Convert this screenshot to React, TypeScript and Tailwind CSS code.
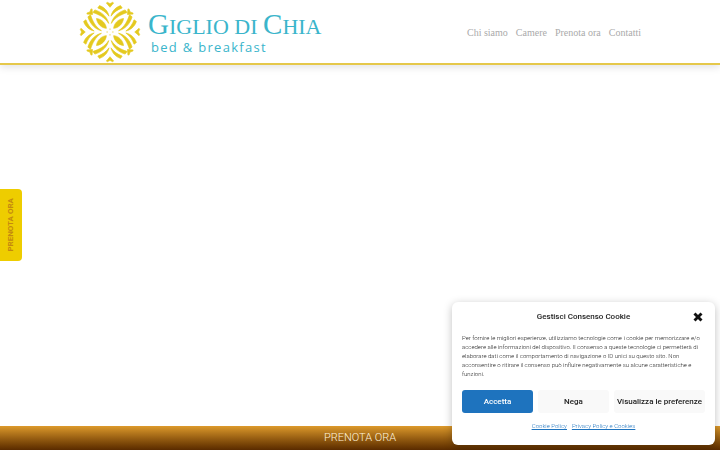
import React from 'react';
import { X } from 'lucide-react';

const navLinks = ['Chi siamo', 'Camere', 'Prenota ora', 'Contatti'];

// One half of an axis group, mirrored and rotated to build the whole flower
const HalfPetals = () => (
  <g>
    <path d="M3 -48 C6 -62 16 -75 32 -80 L37 -73 C24 -68 12 -61 3 -48 Z" />
    <path d="M4 -26 C7 -43 24 -61 46 -67 L52 -59 C34 -53 16 -45 4 -26 Z" />
  </g>
);

// Small tuft at the end of each axis and diagonal
const Tuft = () => <path d="M0 -75 L-11 -88 L-8 -90 L0 -86 L8 -90 L11 -88 Z" />;

const Flower = () => (
  <svg
    viewBox="-94 -94 188 188"
    className="size-[62px] shrink-0"
    fill="#e4c91f"
    stroke="#e4c91f"
    strokeWidth="2"
    strokeLinejoin="round"
    aria-hidden="true"
  >
    {[0, 90, 180, 270].map((angle) => (
      <g key={angle} transform={`rotate(${angle})`}>
        <HalfPetals />
        <g transform="scale(-1 1)">
          <HalfPetals />
        </g>
        <Tuft />
        <g transform="rotate(45)">
          <Tuft />
        </g>
        <path d="M11 -11 C12 -25 24 -39 41 -41 C39 -24 25 -12 11 -11 Z" />
        <path d="M0 -11 L0 -6" />
      </g>
    ))}
  </svg>
);

const Logo = () => (
  <a href="#" className="flex items-center gap-[7px] text-[#3ab5cb]">
    <Flower />
    <span className="flex flex-col font-['Liberation_Serif',serif]">
      <span className="text-[22px] leading-7 whitespace-nowrap">
        <span className="text-[29px]">G</span>IGLIO DI <span className="text-[29px]">C</span>HIA
      </span>
      <span className="pl-[3px] font-['Open_Sans',sans-serif] text-[13px] leading-3 tracking-widest">bed &amp; breakfast</span>
    </span>
  </a>
);

const CookieBanner = () => (
  <section
    aria-labelledby="cookie-title"
    className="fixed right-[5px] bottom-[5px] w-[263px] rounded-md bg-white px-[10px] pt-2 pb-[15px] shadow-[0_2px_8px_rgba(0,0,0,0.25)]"
  >
    <div className="grid h-3 grid-cols-[14px_1fr_14px] items-center">
      <h2 id="cookie-title" className="col-start-2 text-center text-[8px] leading-3 font-medium text-[#222]">
        Gestisci Consenso Cookie
      </h2>
      <button type="button" aria-label="Chiudi" className="flex justify-end text-[#111]">
        <X size={14} strokeWidth={5} strokeLinecap="butt" />
      </button>
    </div>
    <p className="mt-[11px] text-[6px] leading-[9px] font-light text-[#222]">
      Per fornire le migliori esperienze, utilizziamo tecnologie come i cookie per memorizzare e/o accedere alle
      informazioni del dispositivo. Il consenso a queste tecnologie ci permetterà di elaborare dati come il
      comportamento di navigazione o ID unici su questo sito. Non acconsentire o ritirare il consenso può influire
      negativamente su alcune caratteristiche e funzioni.
    </p>
    <div className="mt-3 grid grid-cols-[71px_71px_1fr] gap-[5px] text-[8px] font-medium text-[#222]">
      <button type="button" className="h-[23px] rounded-[3px] bg-[#1e73be] text-white">Accetta</button>
      <button type="button" className="h-[23px] rounded-[3px] bg-[#f9f9f9]">Nega</button>
      <button type="button" className="h-[23px] rounded-[3px] bg-[#f9f9f9] whitespace-nowrap">Visualizza le preferenze</button>
    </div>
    <div className="mt-2 flex justify-center gap-[5px] text-[6px] leading-[9px] font-light text-[#1e73be] underline">
      <a href="#">Cookie Policy</a>
      <a href="#">Privacy Policy e Cookies</a>
    </div>
  </section>
);

export default function App() {
  return (
    <div className="flex min-h-screen flex-col bg-white font-['Roboto',sans-serif]">
      <header className="border-b-2 border-[#e5c84a] shadow-[0_2px_8px_rgba(0,0,0,0.12)]">
        <div className="mx-auto flex h-[63px] w-4/5 items-center justify-between px-[7px]">
          <Logo />
          <nav className="flex gap-2 pt-0.5 font-['Liberation_Serif',serif] text-[10px] text-[#aaa]">
            {navLinks.map((label) => (
              <a key={label} href="#">{label}</a>
            ))}
          </nav>
        </div>
      </header>

      <main className="flex-1" />

      <a
        href="#"
        className="fixed top-1/2 left-0 flex h-[72px] w-[22px] -translate-y-1/2 items-center justify-center rounded-r bg-[#eecd00] text-[8px] font-bold text-[#c4890f]"
      >
        <span className="rotate-180 whitespace-nowrap [writing-mode:vertical-rl]">PRENOTA ORA</span>
      </a>

      <a
        href="#"
        className="flex h-6 items-center justify-center bg-linear-to-b from-[#dd9a2b] to-[#5a2b00] text-[11px] font-light text-[#fff3dc]"
      >
        PRENOTA ORA
      </a>

      <CookieBanner />
    </div>
  );
}
